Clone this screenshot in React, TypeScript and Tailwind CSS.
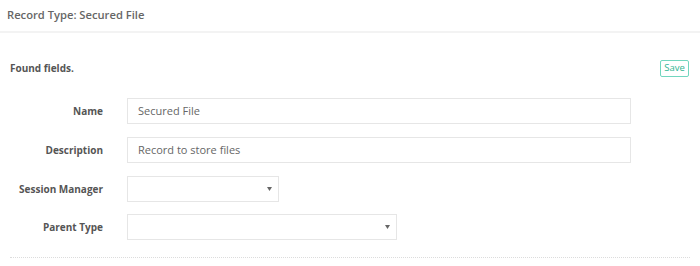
import React from "react";

const font = { fontFamily: '"Open Sans", "Noto Sans", sans-serif' };

function Row({ label, children, className = "" }: { label: string; children: React.ReactNode; className?: string }) {
  return (
    <div className={`flex items-center ${className}`}>
      <div className="w-[93px] shrink-0 text-right text-[10px] font-bold text-[#555]">{label}</div>
      <div className="ml-[24px]">{children}</div>
    </div>
  );
}

function TextInput({ value, width }: { value: string; width: number }) {
  return (
    <div
      className="flex h-[26px] items-center border border-[#e6e6e6] bg-white pl-[10px] text-[11px] text-[#666]"
      style={{ width }}
    >
      {value}
    </div>
  );
}

function Select({ width }: { width: number }) {
  return (
    <div
      className="flex h-[26px] items-center justify-end border border-[#e6e6e6] bg-white pr-[6px]"
      style={{ width }}
    >
      <svg width="5" height="4" viewBox="0 0 5 4">
        <path d="M0 0 L5 0 L2.5 4 Z" fill="#666" />
      </svg>
    </div>
  );
}

export default function App() {
  return (
    <div className="h-[266px] w-[700px] bg-white" style={font}>
      <div className="h-[33px] border-b-2 border-[#f3f3f3] pl-[7px] pt-[7px]">
        <div className="text-[11.2px] font-semibold leading-[16px] text-[#666]">Record Type: Secured File</div>
      </div>
      <div className="px-[10px] pt-[27px]">
        <div className="flex h-[17px] items-center justify-between pr-[1px]">
          <div className="text-[10px] font-bold text-[#555]">Found fields.</div>
          <button className="flex h-[17px] w-[29px] items-center justify-center rounded-[2px] border border-[#72d6bf] text-[9.5px] text-[#2fb492]">
            Save
          </button>
        </div>
        <div className="mt-[21px] flex flex-col">
          <Row label="Name">
            <TextInput value="Secured File" width={504} />
          </Row>
          <Row label="Description" className="mt-[13px]">
            <TextInput value="Record to store files" width={504} />
          </Row>
          <Row label="Session Manager" className="mt-[13px]">
            <Select width={152} />
          </Row>
          <Row label="Parent Type" className="mt-[12px]">
            <Select width={270} />
          </Row>
        </div>
        <div className="mt-[17px] border-t border-dotted border-[#dcdcdc]" />
      </div>
    </div>
  );
}
